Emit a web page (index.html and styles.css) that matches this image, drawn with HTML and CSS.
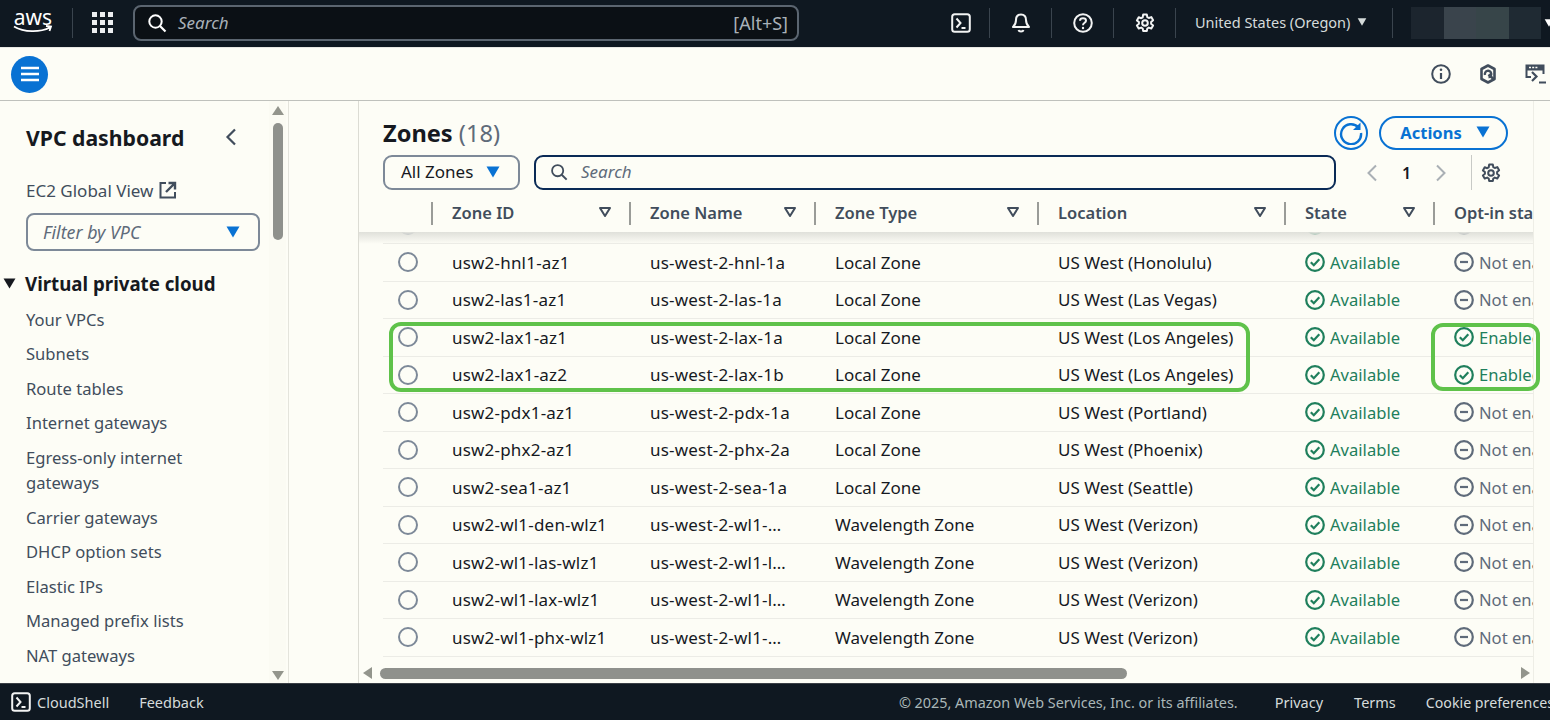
FILE: index.html
```html
<!DOCTYPE html>
<html lang="en">

<head>
    <meta charset="UTF-8">
    <meta name="viewport" content="width=device-width, initial-scale=1.0">
    <title>Zones | VPC Console</title>
    <link rel="stylesheet" href="styles.css">
</head>

<body>
    <svg class="defs" width="0" height="0">
        <symbol id="gear" viewBox="0 0 20 20">
            <path fill="none" stroke="currentColor" stroke-width="2" stroke-linejoin="round" d="M8.200 1.500h3.600l.5 2.600 1.500.9 2.500-.9 1.800 3.100-2 1.700v1.800l2 1.700-1.800 3.100-2.500-.9-1.500.9-.5 2.600H8.200l-.5-2.600-1.500-.9-2.500.9-1.800-3.100 2-1.700V9.100l-2-1.700 1.800-3.100 2.500.9 1.500-.9z" />
            <circle cx="10" cy="10" r="2.800" fill="none" stroke="currentColor" stroke-width="2" />
        </symbol>
        <symbol id="term" viewBox="0 0 20 20">
            <rect x="1.200" y="1.200" width="17.600" height="17.600" rx="2.500" fill="none" stroke="currentColor" stroke-width="2" />
            <path fill="none" stroke="currentColor" stroke-width="2" d="M5.500 5.500 9.500 10l-4 4.500M10.500 15h4" />
        </symbol>
        <symbol id="check" viewBox="0 0 20 20">
            <circle cx="10" cy="10" r="8.800" fill="none" stroke="currentColor" stroke-width="2.200" />
            <path fill="none" stroke="currentColor" stroke-width="2.200" d="m5.800 10.200 3 3 5.500-6" />
        </symbol>
        <symbol id="minus" viewBox="0 0 20 20">
            <circle cx="10" cy="10" r="8.800" fill="none" stroke="currentColor" stroke-width="2.200" />
            <path fill="none" stroke="currentColor" stroke-width="2.200" d="M6 10h8" />
        </symbol>
        <symbol id="sort" viewBox="0 0 14 12">
            <path fill="none" stroke="currentColor" stroke-width="2" stroke-linejoin="round" d="M2 2h10L7 10z" />
        </symbol>
        <symbol id="caret" viewBox="0 0 14 12">
            <path fill="currentColor" d="M.5.500h13L7 11.500z" />
        </symbol>
        <symbol id="search" viewBox="0 0 20 20">
            <circle cx="8.500" cy="8.500" r="6.200" fill="none" stroke="currentColor" stroke-width="2" />
            <path fill="none" stroke="currentColor" stroke-width="2.200" d="m13 13 5.500 5.500" />
        </symbol>
    </svg>

    <header class="topbar">
        <div class="aws-logo">
            <span>aws</span>
            <svg width="40" height="9" viewBox="0 0 40 9"><path fill="none" stroke="#fff" stroke-width="1.800" d="M1 1.500c10 6 26 6 36 1M33 1l5 .5-1.500 4.500" /></svg>
        </div>
        <span class="top-sep logo-sep"></span>
        <svg class="apps" width="21" height="21" viewBox="0 0 21 21" fill="#eceef0">
            <rect width="5" height="5" /><rect x="8" width="5" height="5" /><rect x="16" width="5" height="5" />
            <rect y="8" width="5" height="5" /><rect x="8" y="8" width="5" height="5" /><rect x="16" y="8" width="5" height="5" />
            <rect y="16" width="5" height="5" /><rect x="8" y="16" width="5" height="5" /><rect x="16" y="16" width="5" height="5" />
        </svg>
        <div class="top-search">
            <svg width="20" height="20"><use href="#search" /></svg>
            <span class="top-search-text">Search</span>
            <span class="shortcut">[Alt+S]</span>
        </div>
        <div class="top-icon term-icon"><svg width="20" height="20"><use href="#term" /></svg></div>
        <span class="top-sep"></span>
        <div class="top-icon">
            <svg width="20" height="20" viewBox="0 0 20 20"><path fill="none" stroke="currentColor" stroke-width="2" stroke-linejoin="round" d="M10 1.500c-3.500 0-5 2.500-5 5.500 0 3.500-1 5-3 7h16c-2-2-3-3.500-3-7 0-3-1.500-5.500-5-5.500zM7.500 17c.5 2 4.500 2 5 0" /></svg>
        </div>
        <span class="top-sep"></span>
        <div class="top-icon">
            <svg width="20" height="20" viewBox="0 0 20 20"><circle cx="10" cy="10" r="8.800" fill="none" stroke="currentColor" stroke-width="2" /><path fill="none" stroke="currentColor" stroke-width="2" d="M7 7.800C7 4.500 13 4.500 13 7.800c0 2-3 2-3 4.400" /><circle cx="10" cy="15" r="1.200" fill="currentColor" /></svg>
        </div>
        <span class="top-sep"></span>
        <div class="top-icon"><svg width="20" height="20"><use href="#gear" /></svg></div>
        <span class="top-sep"></span>
        <div class="region">United States (Oregon)<svg width="10" height="8"><use href="#caret" /></svg></div>
        <span class="top-sep"></span>
        <div class="account">
            <span class="acct-a"></span><span class="acct-b"></span><span class="acct-c"></span><span class="acct-d"></span>
            <svg width="10" height="8"><use href="#caret" /></svg>
        </div>
    </header>

    <div class="subbar">
        <button class="menu-btn">
            <svg width="20" height="16" viewBox="0 0 20 16"><path stroke="#fff" stroke-width="2.400" d="M1 2h18M1 8h18M1 14h18" /></svg>
        </button>
        <div class="sub-icons">
            <svg width="20" height="20" viewBox="0 0 20 20"><circle cx="10" cy="10" r="8.800" fill="none" stroke="currentColor" stroke-width="2" /><path fill="none" stroke="currentColor" stroke-width="2.200" d="M10 9v6" /><circle cx="10" cy="5.800" r="1.300" fill="currentColor" /></svg>
            <svg width="20" height="20" viewBox="0 0 20 20"><path fill="none" stroke="currentColor" stroke-width="2.600" stroke-linejoin="round" d="M10 1.500 16.500 5v10L10 18.500 3.500 15V5z" /><path fill="none" stroke="currentColor" stroke-width="2.400" d="M7 11a3.200 3.200 0 1 1 3.500 2.200M10.500 10.500l5 4.500" /></svg>
            <svg width="22" height="20" viewBox="0 0 22 20"><path fill="currentColor" d="M.5.500h19V10h-2V6.500h-15V12H6v2H.5z" /><path stroke="#fdfdf6" stroke-width="1.500" stroke-dasharray="2 1.200" d="M4 3.500h9" /><path fill="none" stroke="currentColor" stroke-width="2.200" d="m7 8 4.500 4.500L7 17M14 18.500h7" /></svg>
        </div>
    </div>

    <div class="main">
        <aside class="sidebar">
            <nav class="side-nav">
                <div class="side-head">
                    <h2>VPC dashboard</h2>
                    <svg width="12" height="18" viewBox="0 0 12 18"><path fill="none" stroke="#414d5c" stroke-width="2.200" d="M10 1.500 2.500 9l7.500 7.500" /></svg>
                </div>
                <a class="global-view">EC2 Global View
                    <svg width="18" height="18" viewBox="0 0 18 18"><path fill="none" stroke="#414d5c" stroke-width="2" d="M7 2H1.500v14.500H16V11" /><path fill="none" stroke="#414d5c" stroke-width="2.400" d="M7 11l8-8M9.500 2H16v6.500" /></svg>
                </a>
                <div class="vpc-filter">
                    <span>Filter by VPC</span>
                    <svg width="14" height="12"><use href="#caret" /></svg>
                </div>
                <div class="side-group">
                    <svg width="13" height="11"><use href="#caret" /></svg>
                    Virtual private cloud
                </div>
                <ul class="side-list">
                    <li>Your VPCs</li>
                    <li>Subnets</li>
                    <li>Route tables</li>
                    <li>Internet gateways</li>
                    <li>Egress-only internet gateways</li>
                    <li>Carrier gateways</li>
                    <li>DHCP option sets</li>
                    <li>Elastic IPs</li>
                    <li>Managed prefix lists</li>
                    <li>NAT gateways</li>
                </ul>
            </nav>
            <div class="vscroll">
                <span class="arrow-up"></span>
                <span class="vthumb"></span>
                <span class="arrow-down"></span>
            </div>
        </aside>

        <section class="panel">
            <div class="panel-head">
                <h1>Zones <span class="count">(18)</span></h1>
                <div class="panel-actions">
                    <button class="refresh">
                        <svg width="24" height="24" viewBox="0 0 24 24"><path fill="none" stroke="currentColor" stroke-width="2.400" d="M19.500 6.500A10 10 0 1 0 22 12" /><path fill="currentColor" d="M21.500 1.500v7.500H14z" /></svg>
                    </button>
                    <button class="actions">Actions<svg width="14" height="12"><use href="#caret" /></svg></button>
                </div>
            </div>
            <div class="tools">
                <div class="zone-select">All Zones<svg width="14" height="12"><use href="#caret" /></svg></div>
                <div class="table-search">
                    <svg width="18" height="18"><use href="#search" /></svg>
                    <span>Search</span>
                </div>
                <div class="pager">
                    <svg width="12" height="18" viewBox="0 0 12 18"><path fill="none" stroke="currentColor" stroke-width="2" d="M10 1.500 2.500 9l7.500 7.500" /></svg>
                    <b>1</b>
                    <svg width="12" height="18" viewBox="0 0 12 18"><path fill="none" stroke="currentColor" stroke-width="2" d="m2 1.500 7.500 7.500L2 16.500" /></svg>
                </div>
                <div class="prefs"><svg width="20" height="20"><use href="#gear" /></svg></div>
            </div>

            <div class="grid head-row">
                <div></div>
                <div class="th">Zone ID<svg width="14" height="12"><use href="#sort" /></svg></div>
                <div class="th">Zone Name<svg width="14" height="12"><use href="#sort" /></svg></div>
                <div class="th">Zone Type<svg width="14" height="12"><use href="#sort" /></svg></div>
                <div class="th">Location<svg width="14" height="12"><use href="#sort" /></svg></div>
                <div class="th">State<svg width="14" height="12"><use href="#sort" /></svg></div>
                <div class="th">Opt-in status</div>
            </div>

            <div class="rows">
                <div class="rows-inner">
                    <!-- rows cut by the scroll edge: only the top of the icons shows -->
                    <div class="grid row"><div class="radio"></div><div></div><div></div><div></div><div></div><div class="td ok"><svg width="20" height="20"><use href="#check" /></svg></div><div class="td off"><svg width="20" height="20"><use href="#minus" /></svg></div></div>
                    <div class="grid row"><div class="radio"></div><div class="td">usw2-hnl1-az1</div><div class="td">us-west-2-hnl-1a</div><div class="td">Local Zone</div><div class="td">US West (Honolulu)</div><div class="td ok"><svg width="20" height="20"><use href="#check" /></svg>Available</div><div class="td off"><svg width="20" height="20"><use href="#minus" /></svg>Not enabled</div></div>
                    <div class="grid row"><div class="radio"></div><div class="td">usw2-las1-az1</div><div class="td">us-west-2-las-1a</div><div class="td">Local Zone</div><div class="td">US West (Las Vegas)</div><div class="td ok"><svg width="20" height="20"><use href="#check" /></svg>Available</div><div class="td off"><svg width="20" height="20"><use href="#minus" /></svg>Not enabled</div></div>
                    <div class="grid row"><div class="radio"></div><div class="td">usw2-lax1-az1</div><div class="td">us-west-2-lax-1a</div><div class="td">Local Zone</div><div class="td">US West (Los Angeles)</div><div class="td ok"><svg width="20" height="20"><use href="#check" /></svg>Available</div><div class="td ok"><svg width="20" height="20"><use href="#check" /></svg>Enabled</div></div>
                    <div class="grid row"><div class="radio"></div><div class="td">usw2-lax1-az2</div><div class="td">us-west-2-lax-1b</div><div class="td">Local Zone</div><div class="td">US West (Los Angeles)</div><div class="td ok"><svg width="20" height="20"><use href="#check" /></svg>Available</div><div class="td ok"><svg width="20" height="20"><use href="#check" /></svg>Enabled</div></div>
                    <div class="grid row"><div class="radio"></div><div class="td">usw2-pdx1-az1</div><div class="td">us-west-2-pdx-1a</div><div class="td">Local Zone</div><div class="td">US West (Portland)</div><div class="td ok"><svg width="20" height="20"><use href="#check" /></svg>Available</div><div class="td off"><svg width="20" height="20"><use href="#minus" /></svg>Not enabled</div></div>
                    <div class="grid row"><div class="radio"></div><div class="td">usw2-phx2-az1</div><div class="td">us-west-2-phx-2a</div><div class="td">Local Zone</div><div class="td">US West (Phoenix)</div><div class="td ok"><svg width="20" height="20"><use href="#check" /></svg>Available</div><div class="td off"><svg width="20" height="20"><use href="#minus" /></svg>Not enabled</div></div>
                    <div class="grid row"><div class="radio"></div><div class="td">usw2-sea1-az1</div><div class="td">us-west-2-sea-1a</div><div class="td">Local Zone</div><div class="td">US West (Seattle)</div><div class="td ok"><svg width="20" height="20"><use href="#check" /></svg>Available</div><div class="td off"><svg width="20" height="20"><use href="#minus" /></svg>Not enabled</div></div>
                    <div class="grid row"><div class="radio"></div><div class="td">usw2-wl1-den-wlz1</div><div class="td">us-west-2-wl1-den-wlz-1</div><div class="td">Wavelength Zone</div><div class="td">US West (Verizon)</div><div class="td ok"><svg width="20" height="20"><use href="#check" /></svg>Available</div><div class="td off"><svg width="20" height="20"><use href="#minus" /></svg>Not enabled</div></div>
                    <div class="grid row"><div class="radio"></div><div class="td">usw2-wl1-las-wlz1</div><div class="td">us-west-2-wl1-las-wlz-1</div><div class="td">Wavelength Zone</div><div class="td">US West (Verizon)</div><div class="td ok"><svg width="20" height="20"><use href="#check" /></svg>Available</div><div class="td off"><svg width="20" height="20"><use href="#minus" /></svg>Not enabled</div></div>
                    <div class="grid row"><div class="radio"></div><div class="td">usw2-wl1-lax-wlz1</div><div class="td">us-west-2-wl1-lax-wlz-1</div><div class="td">Wavelength Zone</div><div class="td">US West (Verizon)</div><div class="td ok"><svg width="20" height="20"><use href="#check" /></svg>Available</div><div class="td off"><svg width="20" height="20"><use href="#minus" /></svg>Not enabled</div></div>
                    <div class="grid row"><div class="radio"></div><div class="td">usw2-wl1-phx-wlz1</div><div class="td">us-west-2-wl1-phx-wlz-1</div><div class="td">Wavelength Zone</div><div class="td">US West (Verizon)</div><div class="td ok"><svg width="20" height="20"><use href="#check" /></svg>Available</div><div class="td off"><svg width="20" height="20"><use href="#minus" /></svg>Not enabled</div></div>
                    <div class="grid row"><div class="radio"></div><div></div><div></div><div></div><div></div><div class="td ok"><svg width="20" height="20"><use href="#check" /></svg></div><div class="td off"><svg width="20" height="20"><use href="#minus" /></svg></div></div>
                </div>
            </div>

            <div class="hscroll">
                <span class="arrow-left"></span>
                <span class="hthumb"></span>
                <span class="arrow-right"></span>
            </div>
        </section>

        <div class="mark mark-rows"></div>
        <div class="mark mark-opt"></div>
    </div>

    <footer class="footer">
        <svg class="foot-term" width="20" height="20"><use href="#term" /></svg>
        <span>CloudShell</span>
        <span class="feedback">Feedback</span>
        <span class="copy">© 2025, Amazon Web Services, Inc. or its affiliates.</span>
        <span class="privacy">Privacy</span>
        <span class="terms">Terms</span>
        <span class="cookie">Cookie preferences</span>
    </footer>
</body>

</html>
```
FILE: styles.css
```css
* {
    box-sizing: border-box;
}

html,
body {
    margin: 0;
    height: 100%;
}

body {
    width: 1550px;
    height: 720px;
    display: flex;
    flex-direction: column;
    overflow: hidden;
    font-family: "Noto Sans", Arial, sans-serif;
    font-size: 16px;
    color: #16191f;
    background-color: #fdfdf6;
}

h1,
h2,
ul {
    margin: 0;
    padding: 0;
}

button {
    font-family: inherit;
    background: none;
    padding: 0;
}

.defs {
    position: absolute;
}

/* top bar */
.topbar {
    height: 48px;
    flex: none;
    display: flex;
    align-items: center;
    padding-bottom: 2px;
    background-color: #0f1821;
    border-bottom: 1px solid #e8e8e4;
    color: #fff;
}

.topbar > * {
    flex: none;
}

.aws-logo {
    width: 40px;
    margin-left: 13px;
    margin-top: -3px;
    display: flex;
    flex-direction: column;
    align-items: center;
    font-size: 21px;
    line-height: 17px;
}

.aws-logo svg {
    margin-top: -1px;
}

.top-sep {
    width: 1px;
    height: 30px;
    background-color: #3a444e;
}

.logo-sep {
    margin-left: 19px;
}

.apps {
    margin-left: 19px;
}

.top-search {
    width: 666px;
    height: 36px;
    margin-left: 20px;
    margin-right: 127px;
    padding: 0 9px 0 12px;
    display: flex;
    align-items: center;
    border: 2.500px solid #5b6570;
    border-radius: 8px;
    background-color: #0b1015;
    font-size: 17px;
}

.top-search-text {
    margin-left: 11px;
    font-style: italic;
    color: #a9b1b8;
}

.shortcut {
    margin-left: auto;
    font-size: 18px;
    color: #a9b1b8;
}

.top-icon {
    width: 61px;
    display: flex;
    justify-content: center;
    color: #f2f3f3;
}

.term-icon {
    width: 55px;
    padding-right: 1px;
    margin-left: 8px;
}

.region {
    width: 216px;
    padding: 0 0 2px 19px;
    display: flex;
    align-items: center;
    gap: 7px;
    font-size: 14.500px;
    color: #d5dbdb;
    white-space: nowrap;
}

.account {
    display: flex;
    align-items: center;
    margin-left: 18px;
    height: 32px;
}

.account span {
    width: 32.500px;
    height: 32px;
}

.account svg {
    margin-left: 3px;
    flex: none;
}

.acct-a {
    background-color: #1c252e;
}

.acct-b {
    background-color: #3a444c;
}

.acct-c {
    background-color: #374549;
}

.acct-d {
    background-color: #1f2a33;
}

/* second bar */
.subbar {
    height: 53px;
    flex: none;
    display: flex;
    align-items: center;
    justify-content: space-between;
    padding-left: 11px;
    border-bottom: 1.500px solid #bfc1bc;
}

.menu-btn {
    width: 37px;
    height: 37px;
    border: none;
    border-radius: 50%;
    background-color: #0972d3;
    display: flex;
    align-items: center;
    justify-content: center;
}

.sub-icons {
    display: flex;
    gap: 27px;
    margin-right: 3px;
    color: #414d5c;
}

/* layout */
.main {
    flex: 1;
    min-height: 0;
    display: flex;
    position: relative;
}

.sidebar {
    width: 289px;
    flex: none;
    display: flex;
    border-right: 1.500px solid #e4e4dc;
}

.side-nav {
    flex: 1;
    padding: 23px 0 0 26px;
    overflow: hidden;
}

.side-head {
    width: 211px;
    display: flex;
    align-items: center;
    justify-content: space-between;
    height: 26px;
}

.side-head h2 {
    font-size: 21.200px;
    font-weight: 700;
    color: #16191f;
}

.global-view {
    display: flex;
    align-items: center;
    gap: 6px;
    margin-top: 27px;
    height: 26px;
    font-size: 17px;
    color: #414d5c;
}

.vpc-filter {
    width: 234px;
    height: 38px;
    margin-top: 10px;
    padding: 0 18px 0 15px;
    display: flex;
    align-items: center;
    justify-content: space-between;
    border: 2.500px solid #7d8998;
    border-radius: 8px;
    font-size: 17.800px;
    font-style: italic;
    color: #5f6b7a;
}

.vpc-filter svg,
.zone-select svg,
.actions svg {
    color: #0972d3;
}

.side-group {
    display: flex;
    align-items: center;
    gap: 9px;
    margin: 19px 0 0 -23px;
    height: 26px;
    font-size: 18.700px;
    font-weight: 700;
    color: #16191f;
    white-space: nowrap;
}

.side-list {
    list-style: none;
    margin-top: 10.700px;
    width: 190px;
}

.side-list li {
    font-size: 16.600px;
    line-height: 25px;
    margin-bottom: 9.600px;
    color: #414d5c;
}

.vscroll {
    width: 17px;
    margin-right: 2px;
    flex: none;
    padding: 5px 0 3px;
    display: flex;
    flex-direction: column;
    align-items: center;
    background-color: #fbfbf3;
}

.arrow-up {
    border-left: 6px solid transparent;
    border-right: 6px solid transparent;
    border-bottom: 9px solid #93958c;
}

.vthumb {
    width: 10px;
    height: 117px;
    margin-top: 8px;
    border-radius: 5px;
    background-color: #8f918c;
}

.arrow-down {
    margin-top: auto;
    border-left: 6px solid transparent;
    border-right: 6px solid transparent;
    border-top: 9px solid #93958c;
}

/* zones panel */
.panel {
    width: 1176px;
    flex: none;
    margin-left: 69px;
    display: flex;
    flex-direction: column;
    overflow: hidden;
    border-left: 1.500px solid #dcdcd4;
    border-right: 1px solid #eeeee6;
}

.panel-head {
    height: 54px;
    padding: 15px 25px 0 24px;
    display: flex;
    justify-content: space-between;
}

.panel-head h1 {
    font-size: 23.600px;
    line-height: 36px;
    margin-top: -1px;
    font-weight: 700;
    color: #16191f;
}

.count {
    font-weight: 400;
    color: #5f6b7a;
}

.panel-actions {
    display: flex;
    gap: 11px;
    color: #0972d3;
}

.refresh {
    width: 34px;
    height: 34px;
    border: 2.500px solid #0972d3;
    border-radius: 50%;
    color: #0972d3;
    display: flex;
    align-items: center;
    justify-content: center;
}

.actions {
    width: 129px;
    height: 34px;
    padding: 0 0 2px 3px;
    border: 2.500px solid #0972d3;
    border-radius: 17px;
    color: #0972d3;
    font-size: 16.500px;
    font-weight: 700;
    display: flex;
    align-items: center;
    justify-content: center;
    gap: 14px;
}

.tools {
    height: 35px;
    padding-left: 24px;
    display: flex;
    align-items: center;
}

.zone-select {
    width: 137px;
    height: 35px;
    padding: 0 18px 2px 16px;
    display: flex;
    align-items: center;
    justify-content: space-between;
    border: 2.500px solid #7d8998;
    border-radius: 9px;
    font-size: 17px;
}

.table-search {
    width: 802px;
    height: 35px;
    margin-left: 14px;
    padding: 0 0 2px 14px;
    display: flex;
    align-items: center;
    gap: 13px;
    border: 2.500px solid #0a2a56;
    border-radius: 9px;
    font-size: 17px;
    color: #5f6b7a;
    font-style: italic;
}

.table-search svg {
    color: #414d5c;
}

.pager {
    width: 135px;
    padding: 0 24px 0 30px;
    display: flex;
    align-items: center;
    justify-content: space-between;
    color: #aab0b5;
}

.pager b {
    color: #16191f;
    font-weight: 600;
}

.prefs {
    width: 41px;
    height: 35px;
    padding-left: 9px;
    display: flex;
    align-items: center;
    border-left: 1px solid #c8cac6;
    color: #414d5c;
}

/* table */
.grid {
    display: grid;
    grid-template-columns: 49px 198px 185px 223px 247px 149px 160px;
    width: 1234px;
    margin-left: 24px;
}

.head-row {
    height: 32px;
    margin-top: 6px;
    margin-bottom: 4px;
    flex: none;
    position: relative;
    z-index: 1;
}

.th {
    display: flex;
    align-items: center;
    justify-content: space-between;
    padding: 0 18px 0 20px;
    font-size: 16.500px;
    font-weight: 600;
    color: #414d5c;
    white-space: nowrap;
    position: relative;
}

.th svg {
    color: #414d5c;
}

.th::before {
    content: "";
    position: absolute;
    left: -1px;
    top: 6px;
    width: 2px;
    height: 23px;
    background-color: #9a9c98;
}

.head-row .th:first-of-type::before {
    background-color: #cfd0ca;
}

.rows {
    flex: none;
    height: 433px;
    overflow: hidden;
    position: relative;
}

.rows::before {
    content: "";
    position: absolute;
    z-index: 1;
    left: 0;
    right: 0;
    top: 0;
    height: 12px;
    background: linear-gradient(#dfe0da, rgba(253, 253, 246, 0));
}

.rows-inner {
    margin-top: -25.500px;
}

.row {
    height: 37.500px;
    align-items: center;
    border-bottom: 1px solid #ecece6;
}

.radio {
    width: 20px;
    height: 20px;
    margin-left: 15px;
    border: 2px solid #7d8998;
    border-radius: 50%;
}

.td {
    padding: 0 22px 0 20px;
    font-size: 17px;
    white-space: nowrap;
    overflow: hidden;
    text-overflow: ellipsis;
    color: #16191f;
}

.td:nth-child(2) {
    padding-right: 10px;
    letter-spacing: .2px;
}

.td:nth-child(3) {
    padding-right: 24px;
    letter-spacing: .2px;
}

.ok,
.off {
    display: flex;
    align-items: center;
    gap: 5px;
    overflow: visible;
    font-size: 16.600px;
}

.ok {
    color: #1f7f5c;
}

.off {
    color: #5f6b7a;
}

.ok svg,
.off svg {
    flex: none;
}

.hscroll {
    flex: 1;
    display: flex;
    align-items: center;
    padding: 0 3px 2px 4px;
}

.arrow-left {
    border-top: 6px solid transparent;
    border-bottom: 6px solid transparent;
    border-right: 9px solid #93958c;
}

.hthumb {
    width: 747px;
    height: 11px;
    margin-left: 8px;
    border-radius: 6px;
    background-color: #8f918c;
}

.arrow-right {
    margin-left: auto;
    border-top: 6px solid transparent;
    border-bottom: 6px solid transparent;
    border-left: 9px solid #93958c;
}

/* green markers drawn over the table */
.mark {
    position: absolute;
    border: 4px solid #5fc24a;
    border-radius: 12px;
    z-index: 2;
}

.mark-rows {
    left: 389px;
    top: 221px;
    width: 861px;
    height: 70px;
}

.mark-opt {
    left: 1431px;
    top: 222px;
    width: 109px;
    height: 68px;
}

/* footer */
.footer {
    height: 37px;
    flex: none;
    display: flex;
    align-items: center;
    padding-left: 11px;
    background-color: #0f1821;
    border-top: 1px solid #3a3f45;
    font-size: 14.500px;
    color: #d5dbdb;
    white-space: nowrap;
}

.foot-term {
    margin-right: 6px;
    color: #f2f3f3;
}

.feedback {
    margin-left: 30px;
}

.copy {
    margin-left: auto;
    font-size: 14.400px;
    color: #aab7b8;
}

.privacy {
    margin-left: 37px;
}

.terms {
    margin-left: 31px;
}

.cookie {
    margin-left: 30px;
    margin-right: -4px;
    font-size: 14.200px;
}
```
